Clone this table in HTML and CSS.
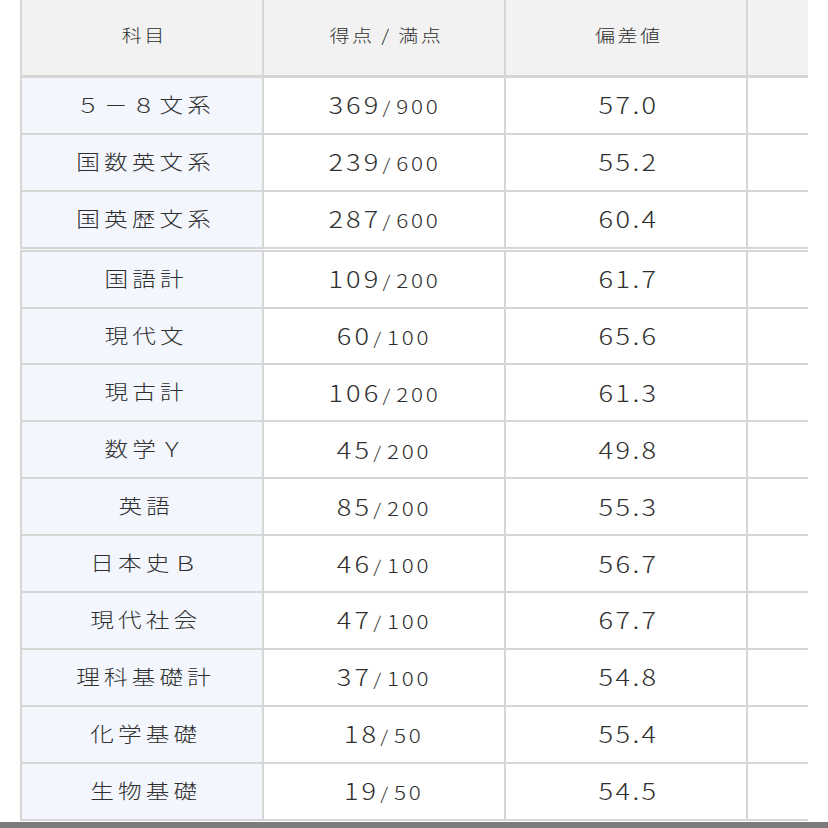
FILE: index.html
```html
<!DOCTYPE html>
<html lang="ja">
<head>
<meta charset="utf-8">
<link rel="stylesheet" href="styles.css">
</head>
<body>
<div class="page">
<table class="scores">
  <thead>
    <tr><th class="c-subj"><span class="t">科目</span></th><th class="c-score"><span class="t">得点 / 満点</span></th><th class="c-dev"><span class="t">偏差値</span></th><th class="c-extra"></th></tr>
  </thead>
  <tbody>
    <tr><td class="subj"><span class="t">５－８文系</span></td><td class="score"><span class="t"><span class="got">369</span><span class="sep">/</span><span class="max">900</span></span></td><td class="dev"><span class="t">57.0</span></td><td></td></tr>
    <tr><td class="subj"><span class="t">国数英文系</span></td><td class="score"><span class="t"><span class="got">239</span><span class="sep">/</span><span class="max">600</span></span></td><td class="dev"><span class="t">55.2</span></td><td></td></tr>
    <tr><td class="subj"><span class="t">国英歴文系</span></td><td class="score"><span class="t"><span class="got">287</span><span class="sep">/</span><span class="max">600</span></span></td><td class="dev"><span class="t">60.4</span></td><td></td></tr>
  </tbody>
  <tbody class="group">
    <tr><td class="subj"><span class="t">国語計</span></td><td class="score"><span class="t"><span class="got">109</span><span class="sep">/</span><span class="max">200</span></span></td><td class="dev"><span class="t">61.7</span></td><td></td></tr>
    <tr><td class="subj"><span class="t">現代文</span></td><td class="score"><span class="t"><span class="got">60</span><span class="sep">/</span><span class="max">100</span></span></td><td class="dev"><span class="t">65.6</span></td><td></td></tr>
    <tr><td class="subj"><span class="t">現古計</span></td><td class="score"><span class="t"><span class="got">106</span><span class="sep">/</span><span class="max">200</span></span></td><td class="dev"><span class="t">61.3</span></td><td></td></tr>
    <tr><td class="subj"><span class="t">数学Ｙ</span></td><td class="score"><span class="t"><span class="got">45</span><span class="sep">/</span><span class="max">200</span></span></td><td class="dev"><span class="t">49.8</span></td><td></td></tr>
    <tr><td class="subj"><span class="t">英語</span></td><td class="score"><span class="t"><span class="got">85</span><span class="sep">/</span><span class="max">200</span></span></td><td class="dev"><span class="t">55.3</span></td><td></td></tr>
    <tr><td class="subj"><span class="t">日本史Ｂ</span></td><td class="score"><span class="t"><span class="got">46</span><span class="sep">/</span><span class="max">100</span></span></td><td class="dev"><span class="t">56.7</span></td><td></td></tr>
    <tr><td class="subj"><span class="t">現代社会</span></td><td class="score"><span class="t"><span class="got">47</span><span class="sep">/</span><span class="max">100</span></span></td><td class="dev"><span class="t">67.7</span></td><td></td></tr>
    <tr><td class="subj"><span class="t">理科基礎計</span></td><td class="score"><span class="t"><span class="got">37</span><span class="sep">/</span><span class="max">100</span></span></td><td class="dev"><span class="t">54.8</span></td><td></td></tr>
    <tr><td class="subj"><span class="t">化学基礎</span></td><td class="score"><span class="t"><span class="got">18</span><span class="sep">/</span><span class="max">50</span></span></td><td class="dev"><span class="t">55.4</span></td><td></td></tr>
    <tr><td class="subj"><span class="t">生物基礎</span></td><td class="score"><span class="t"><span class="got">19</span><span class="sep">/</span><span class="max">50</span></span></td><td class="dev"><span class="t">54.5</span></td><td></td></tr>
  </tbody>
</table>
</div>
<div class="bottom-bar"></div>
</body>
</html>
```
FILE: styles.css
```css
html, body {
  margin: 0;
  padding: 0;
  background: #ffffff;
}
body {
  width: 828px;
  height: 828px;
  overflow: hidden;
  font-family: "Noto Sans CJK JP", "Noto Sans", sans-serif;
  color: #333333;
  display: flex;
  flex-direction: column;
}
.page {
  padding-left: 20px;
  height: 822px;
  overflow: hidden;
}
.scores {
  border-collapse: collapse;
  width: 788px;
  table-layout: fixed;
  border-left: 2px solid #d3d3d3;
}
.scores th,
.scores td {
  border: 2px solid #d6d6d6;
  text-align: center;
  vertical-align: middle;
  padding: 0;
  white-space: nowrap;
}
.t {
  display: inline-block;
  transform: scaleX(1.18);
}
.scores th {
  height: 69px;
  padding-bottom: 6px;
  border-top: none;
  border-bottom-width: 3px;
  background: #f2f2f2;
  font-weight: 300;
  font-size: 17px;
  color: #2f2f2f;
  letter-spacing: 2px;
  text-indent: 2px;
}
.c-subj, .c-score, .c-dev { width: 240px; }
.scores td {
  height: 52.9px;
  padding-bottom: 2px;
  color: #2f2f2f;
  font-weight: 300;
}
.scores td:last-child, .scores th:last-child { border-right: none; }
.subj {
  background: #f3f6fc;
  font-size: 20px;
  letter-spacing: 3.5px;
  text-indent: 3.5px;
}
.got {
  font-size: 23px;
  letter-spacing: 2.6px;
}
.sep {
  font-size: 17px;
  margin: 0 5px 0 1px;
}
.max {
  font-size: 19px;
  letter-spacing: 2.3px;
}
.dev {
  font-size: 23px;
  letter-spacing: 2px;
  text-indent: 2px;
}
.group tr:first-child td {
  border-top: 5px double #d6d6d6;
}
.bottom-bar {
  height: 6px;
  background: #7b7b7b;
  flex: none;
}
```
